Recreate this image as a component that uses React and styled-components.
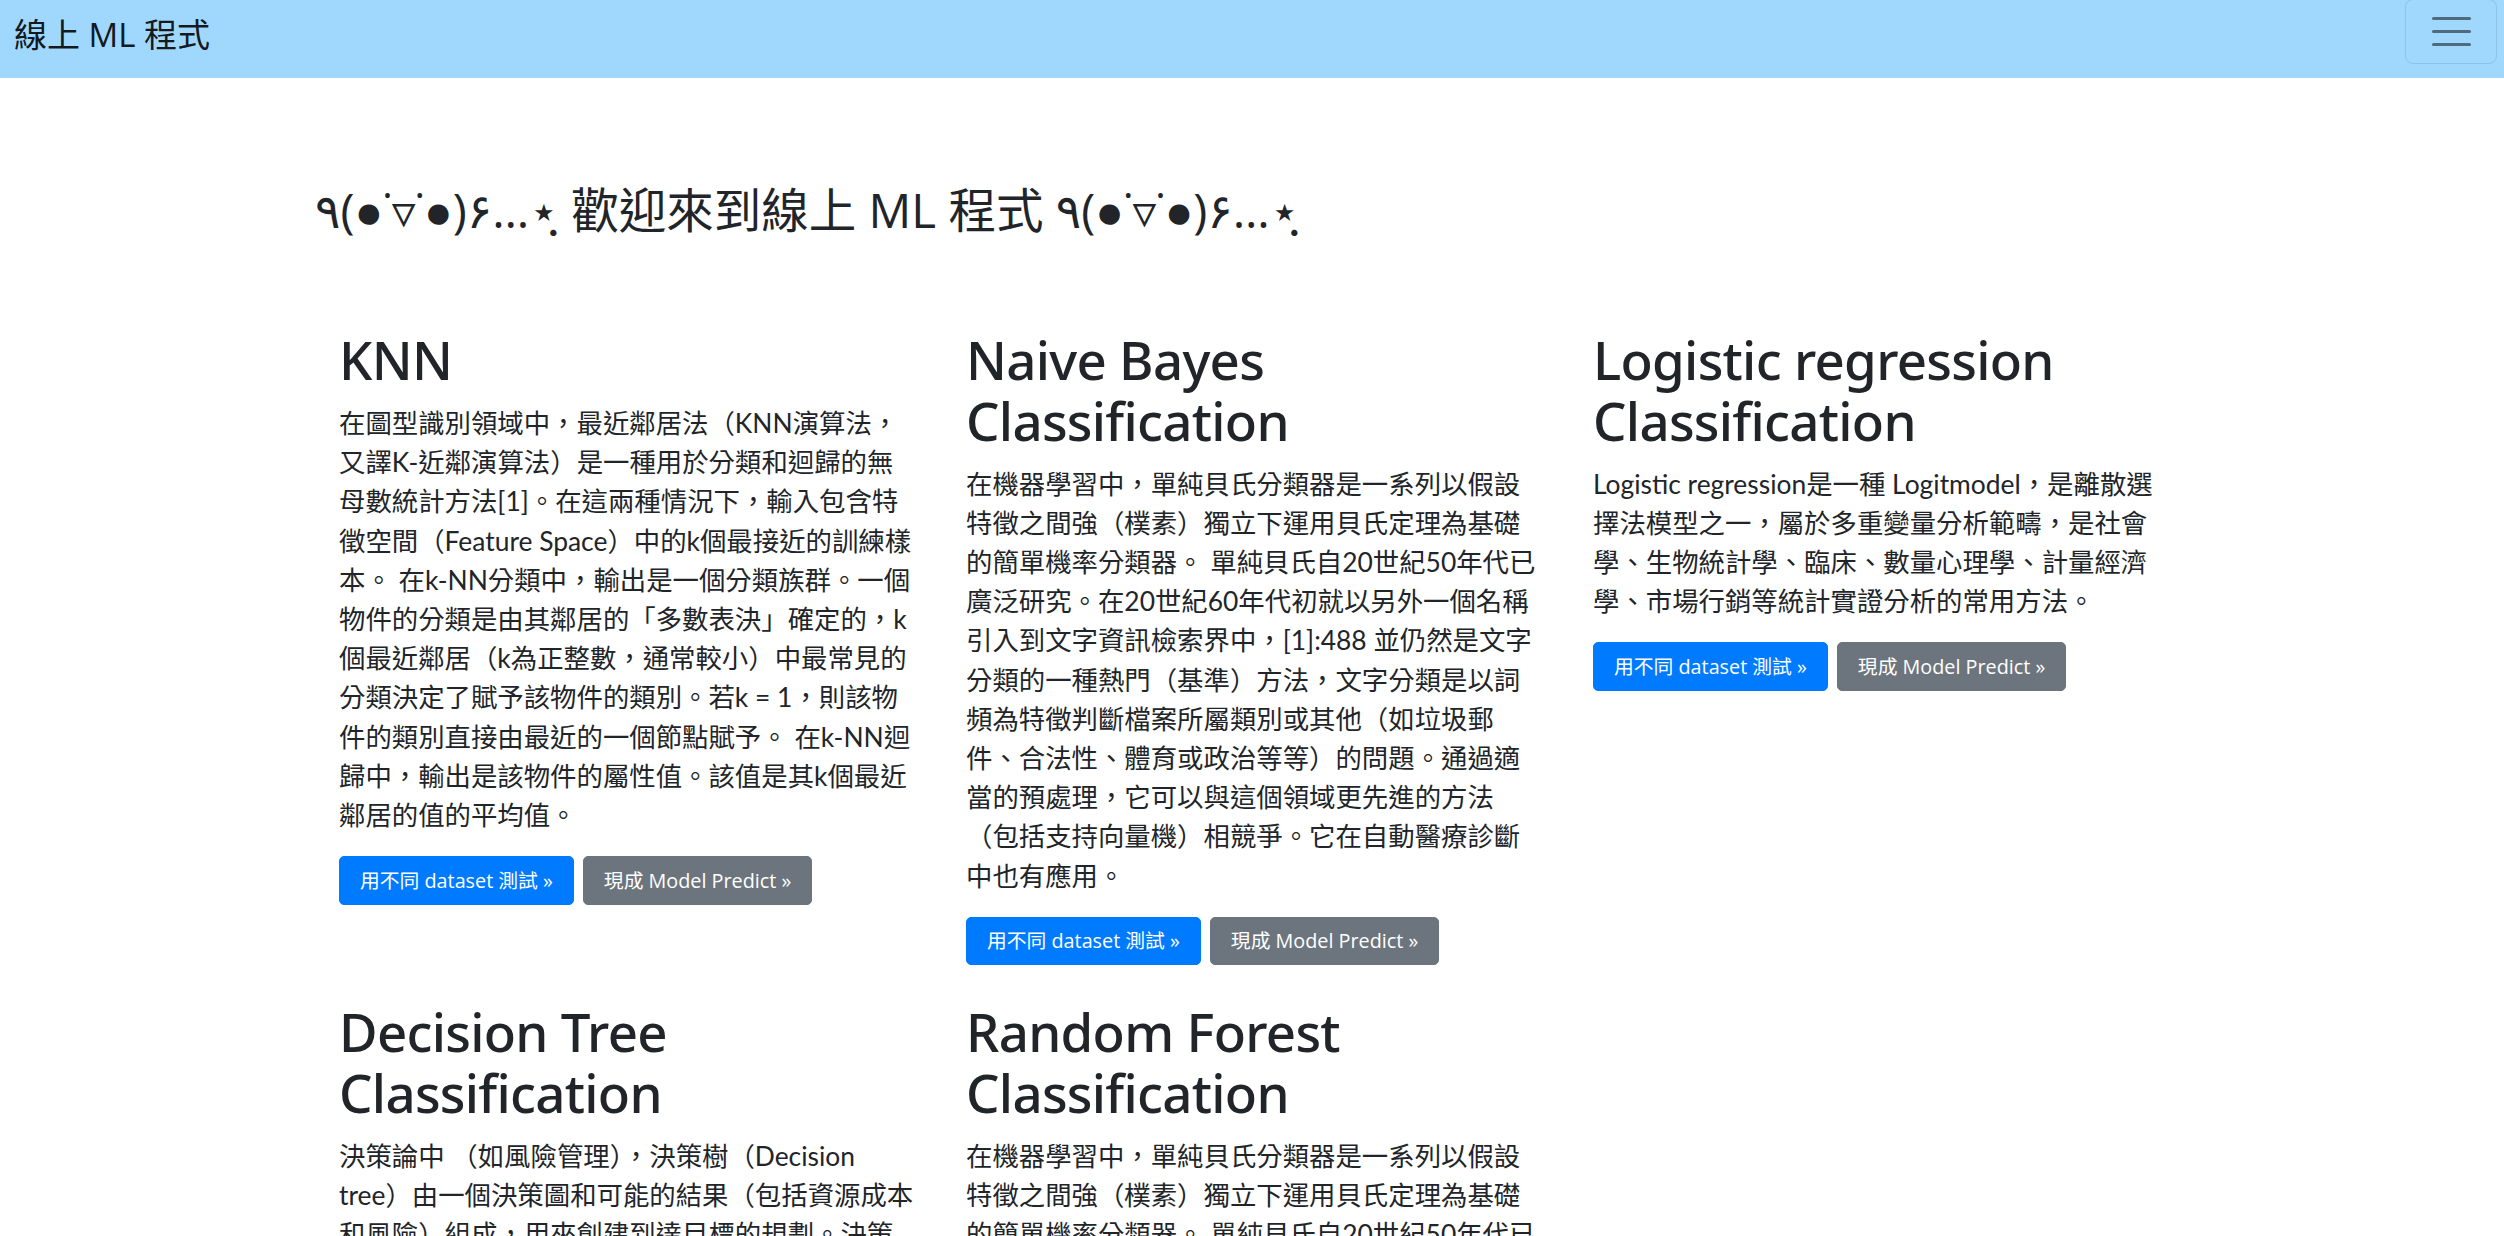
import React from "react";
import styled, { createGlobalStyle } from "styled-components";

const GlobalStyle = createGlobalStyle`
  html, body {
    margin: 0;
    padding: 0;
    background: #fff;
  }
  body {
    font-family: "Open Sans", "Noto Sans CJK TC", "DejaVu Sans", sans-serif;
    font-size: 26.4px;
    line-height: 1.5;
    color: #212529;
  }
  * {
    box-sizing: border-box;
  }
`;

const models = [
  {
    title: "KNN",
    text:
      "在圖型識別領域中，最近鄰居法（KNN演算法，又譯K-近鄰演算法）是一種用於分類和迴歸的無母數統計方法[1]。在這兩種情況下，輸入包含特徵空間（Feature Space）中的k個最接近的訓練樣本。 在k-NN分類中，輸出是一個分類族群。一個物件的分類是由其鄰居的「多數表決」確定的，k個最近鄰居（k為正整數，通常較小）中最常見的分類決定了賦予該物件的類別。若k = 1，則該物件的類別直接由最近的一個節點賦予。 在k-NN迴歸中，輸出是該物件的屬性值。該值是其k個最近鄰居的值的平均值。",
  },
  {
    title: "Naive Bayes Classification",
    text:
      "在機器學習中，單純貝氏分類器是一系列以假設特徵之間強（樸素）獨立下運用貝氏定理為基礎的簡單機率分類器。 單純貝氏自20世紀50年代已廣泛研究。在20世紀60年代初就以另外一個名稱引入到文字資訊檢索界中，[1]:488 並仍然是文字分類的一種熱門（基準）方法，文字分類是以詞頻為特徵判斷檔案所屬類別或其他（如垃圾郵件、合法性、體育或政治等等）的問題。通過適當的預處理，它可以與這個領域更先進的方法（包括支持向量機）相競爭。它在自動醫療診斷中也有應用。",
  },
  {
    title: "Logistic regression Classification",
    text:
      "Logistic regression是一種 Logitmodel，是離散選擇法模型之一，屬於多重變量分析範疇，是社會學、生物統計學、臨床、數量心理學、計量經濟學、市場行銷等統計實證分析的常用方法。",
  },
  {
    title: "Decision Tree Classification",
    text:
      "決策論中 （如風險管理），決策樹（Decision tree）由一個決策圖和可能的結果（包括資源成本和風險）組成，用來創建到達目標的規劃。決策樹建立並用來輔助決策，是一種特殊的樹結構。",
  },
  {
    title: "Random Forest Classification",
    text:
      "在機器學習中，單純貝氏分類器是一系列以假設特徵之間強（樸素）獨立下運用貝氏定理為基礎的簡單機率分類器。 單純貝氏自20世紀50年代已廣泛研究。在20世紀60年代初就以另外一個名稱引入到文字資訊檢索界中，[1]:488 並仍然是文字分類的一種熱門（基準）方法。",
  },
];

const kaomoji = "٩(●˙▿˙●)۶…⋆ฺ";

export default function App() {
  return (
    <>
      <GlobalStyle />
      <NavBar>
        <Brand href="#">線上 ML 程式</Brand>
        <Toggler type="button" aria-label="Toggle navigation">
          <TogglerBar />
          <TogglerBar />
          <TogglerBar />
        </Toggler>
      </NavBar>

      <Main>
        <Container>
          <Welcome>
            {kaomoji} 歡迎來到線上 ML 程式 {kaomoji}
          </Welcome>
        </Container>

        <Container>
          <ModelGrid>
            {models.map((m) => (
              <ModelCol key={m.title}>
                <ModelTitle>{m.title}</ModelTitle>
                <ModelText>{m.text}</ModelText>
                <ButtonRow>
                  <Btn href="#" $variant="primary">
                    用不同 dataset 測試 &raquo;
                  </Btn>
                  <Btn href="#" $variant="secondary">
                    現成 Model Predict &raquo;
                  </Btn>
                </ButtonRow>
              </ModelCol>
            ))}
          </ModelGrid>
        </Container>
      </Main>
    </>
  );
}

const NavBar = styled.nav`
  height: 78px;
  background: rgb(160, 215, 253);
  display: flex;
  align-items: flex-start;
  justify-content: space-between;
  padding: 0 7px 0 14px;
`;

const Brand = styled.a`
  font-size: 33px;
  line-height: 1.5;
  padding-top: 10px;
  color: rgba(0, 0, 0, 0.9);
  text-decoration: none;
  white-space: nowrap;
`;

const Toggler = styled.button`
  width: 92px;
  height: 65px;
  margin-top: -1px;
  background: transparent;
  border: 1.6px solid rgba(0, 0, 0, 0.1);
  border-radius: 8px;
  display: flex;
  flex-direction: column;
  align-items: center;
  justify-content: center;
  gap: 9.5px;
  padding: 0;
  cursor: pointer;
`;

const TogglerBar = styled.span`
  display: block;
  width: 39px;
  height: 3.5px;
  border-radius: 2px;
  background: rgba(0, 0, 0, 0.5);
`;

const Main = styled.main`
  padding-top: 103px;
`;

const Container = styled.div`
  width: 1881px;
  margin-left: calc(50% - 937px);
`;

const Welcome = styled.h1`
  margin: 0 0 92px;
  font-family: "Open Sans", "Liberation Sans", "DejaVu Sans", "Noto Sans CJK TC",
    sans-serif;
  font-size: 47.5px;
  font-weight: 400;
  line-height: 1.2;
  white-space: nowrap;
`;

const ModelGrid = styled.div`
  display: grid;
  grid-template-columns: repeat(3, 627px);
  align-items: start;
`;

const ModelCol = styled.div`
  padding: 0 24px;
`;

const ModelTitle = styled.h2`
  margin: 0 0 13.2px;
  font-family: "Noto Sans", "Open Sans", sans-serif;
  font-size: 52.8px;
  font-weight: 500;
  line-height: 1.15;
  letter-spacing: -0.7px;
`;

const ModelText = styled.p`
  width: 579px;
  margin: 0 0 21px;
  font-family: Lato, "Noto Sans CJK TC", sans-serif;
  line-height: 39.2px;
`;

const ButtonRow = styled.p`
  margin: 0 0 37px;
  display: flex;
  gap: 9px;
`;

const Btn = styled.a`
  display: inline-block;
  padding: 8.4px 20px;
  font-size: 19.8px;
  line-height: 1.5;
  border-radius: 5px;
  border: 1.65px solid
    ${(p) => (p.$variant === "primary" ? "#007bff" : "#6c757d")};
  background: ${(p) => (p.$variant === "primary" ? "#007bff" : "#6c757d")};
  color: #fff;
  text-decoration: none;
  white-space: nowrap;
`;
